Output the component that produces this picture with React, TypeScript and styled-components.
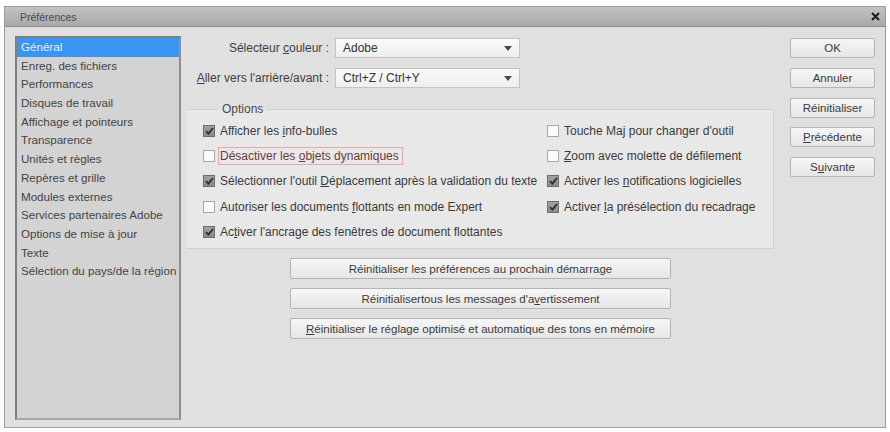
import React, { FC } from "react";
import styled, { createGlobalStyle } from "styled-components";

const GlobalStyle = createGlobalStyle`
  html, body {
    margin: 0;
    padding: 0;
    background: #ffffff;
  }
  body {
    font-family: "Liberation Sans", Arial, sans-serif;
    font-size: 12px;
    color: #3c3c3c;
  }
`;

const Window = styled.div`
  width: 882px;
  height: 422px;
  margin: 6px 4px 4px 4px;
  box-sizing: border-box;
  border: 1px solid #9c9c9c;
  background: #e0e0e0;
  display: flex;
  flex-direction: column;
`;

const TitleBar = styled.div`
  height: 19px;
  flex-shrink: 0;
  display: flex;
  align-items: center;
  justify-content: space-between;
  padding: 0 5px 0 15px;
  background: linear-gradient(#c2c2c2, #a9a9a9);
  border-bottom: 1px solid #8c8c8c;
`;

const TitleText = styled.span`
  font-size: 10.5px;
  color: #4a4a4a;
`;

const Close = styled.svg`
  width: 9px;
  height: 9px;
`;

const Body = styled.div`
  flex: 1;
  display: flex;
  padding: 9px 9px 7px 10px;
  min-height: 0;
`;

const Sidebar = styled.ul`
  list-style: none;
  margin: 0;
  padding: 0;
  width: 166px;
  box-sizing: border-box;
  border: 2px solid #8f8f8f;
  border-top-color: #7e7e7e;
  border-left-color: #7e7e7e;
  border-bottom-color: #a8a8a8;
  background: #d3d3d3;
  flex-shrink: 0;
`;

const SideItem = styled.li<{ $active?: boolean }>`
  height: 18.7px;
  line-height: 18.7px;
  padding-left: 4px;
  font-size: 11.6px;
  background: ${(p) => (p.$active ? "#3a95f2" : "transparent")};
  color: ${(p) => (p.$active ? "#e4eefb" : "#444")};
  white-space: nowrap;
`;

const Main = styled.div`
  width: 587px;
  margin-left: 6px;
  padding-top: 1px;
  display: flex;
  flex-direction: column;
  flex-shrink: 0;
`;

const FormRow = styled.div<{ $top: number }>`
  display: flex;
  align-items: center;
  margin-top: ${(p) => p.$top}px;
`;

const FormLabel = styled.span`
  width: 142px;
  text-align: right;
  white-space: nowrap;
  color: #3e3e3e;
`;

const Select = styled.div`
  margin-left: 6px;
  width: 185px;
  height: 20px;
  box-sizing: border-box;
  border: 1px solid #c4c4c4;
  background: linear-gradient(#fafafa, #eeeeee);
  display: flex;
  align-items: center;
  justify-content: space-between;
  padding: 0 7px 0 7px;
  color: #333;
`;

const Arrow = styled.svg`
  width: 8px;
  height: 5px;
`;

const Group = styled.fieldset`
  margin: 14px 0 0 0;
  padding: 2px 0 5px 15px;
  border: 1px solid #d2d2d2;
  border-left-color: #e6e6e6;
  background: #e8e8e8;
  height: 147px;
  box-sizing: border-box;
  min-width: 0;
`;

const Legend = styled.legend`
  margin-left: 16px;
  padding: 0 3px;
  color: #4a4a4a;
`;

const OptionGrid = styled.div`
  display: grid;
  grid-template-columns: 344px auto;
  grid-auto-rows: 25.3px;
  align-items: center;
`;

const Check = styled.label<{ $focus?: boolean }>`
  display: flex;
  align-items: center;
  white-space: nowrap;
  color: ${(p) => (p.$focus ? "#6a3c3c" : "#3a3a3a")};
`;

const Box = styled.span<{ $on?: boolean }>`
  width: 12px;
  height: 12px;
  box-sizing: border-box;
  flex-shrink: 0;
  margin-right: 5px;
  border: 1px solid ${(p) => (p.$on ? "#6e6e6e" : "#a6a6a6")};
  background: ${(p) => (p.$on ? "linear-gradient(#a2a2a2, #8a8a8a)" : "#fbfbfb")};
  display: flex;
  align-items: center;
  justify-content: center;
`;

const Focus = styled.span`
  border: 1px solid #e6a9a9;
  padding: 1px 3px 1px 1px;
  margin-left: -2px;
`;

const Key = styled.u`
  text-underline-offset: 1px;
`;

const ResetList = styled.div`
  display: flex;
  flex-direction: column;
  align-items: center;
  gap: 9px;
  margin-top: 9px;
`;

const Button = styled.div<{ $wide?: boolean }>`
  width: ${(p) => (p.$wide ? "381px" : "85px")};
  height: ${(p) => (p.$wide ? "21px" : "20px")};
  box-sizing: border-box;
  border: 1px solid #b4b4b4;
  border-radius: 2px;
  background: linear-gradient(#f6f6f6, #e6e6e6);
  display: flex;
  align-items: center;
  justify-content: center;
  color: #3a3a3a;
  font-size: 11.5px;
  white-space: nowrap;
`;

const SideButtons = styled.div`
  margin-left: 16px;
  padding-top: 2px;
  display: flex;
  flex-direction: column;
  gap: 9.8px;
`;

const CheckMark: FC = () => (
  <svg width="9" height="8" viewBox="0 0 9 8">
    <path d="M1 4.2 L3.4 6.6 L8 1" fill="none" stroke="#2e2e2e" strokeWidth="1.8" />
  </svg>
);

const Opt: FC<{ on?: boolean; focus?: boolean; children: React.ReactNode }> = ({ on, focus, children }) => (
  <Check $focus={focus}>
    <Box $on={on}>{on && <CheckMark />}</Box>
    {focus ? <Focus>{children}</Focus> : <span>{children}</span>}
  </Check>
);

const sections = [
  "Général",
  "Enreg. des fichiers",
  "Performances",
  "Disques de travail",
  "Affichage et pointeurs",
  "Transparence",
  "Unités et règles",
  "Repères et grille",
  "Modules externes",
  "Services partenaires Adobe",
  "Options de mise à jour",
  "Texte",
  "Sélection du pays/de la région",
];

const DropArrow: FC = () => (
  <Arrow viewBox="0 0 8 5">
    <path d="M0 0 H8 L4 5 Z" fill="#4a4a4a" />
  </Arrow>
);

const App: FC = () => {
  return (
    <>
      <GlobalStyle />
      <Window>
        <TitleBar>
          <TitleText>Préférences</TitleText>
          <Close viewBox="0 0 9 9">
            <path d="M1 1 L8 8 M8 1 L1 8" stroke="#1e1e1e" strokeWidth="2" />
          </Close>
        </TitleBar>
        <Body>
          <Sidebar>
            {sections.map((s, i) => (
              <SideItem key={s} $active={i === 0}>
                {s}
              </SideItem>
            ))}
          </Sidebar>
          <Main>
            <FormRow $top={1}>
              <FormLabel>
                Sélecteur <Key>c</Key>ouleur :
              </FormLabel>
              <Select>
                <span>Adobe</span>
                <DropArrow />
              </Select>
            </FormRow>
            <FormRow $top={10}>
              <FormLabel>
                <Key>A</Key>ller vers l'arrière/avant :
              </FormLabel>
              <Select>
                <span>Ctrl+Z / Ctrl+Y</span>
                <DropArrow />
              </Select>
            </FormRow>
            <Group>
              <Legend>Options</Legend>
              <OptionGrid>
                <Opt on>
                  Afficher les <Key>i</Key>nfo-bulles
                </Opt>
                <Opt>
                  Touche Ma<Key>j</Key> pour changer d'outil
                </Opt>
                <Opt focus>
                  Désactiver les <Key>o</Key>bjets dynamiques
                </Opt>
                <Opt>
                  <Key>Z</Key>oom avec molette de défilement
                </Opt>
                <Opt on>
                  Sélectionner l'outil <Key>D</Key>éplacement après la validation du texte
                </Opt>
                <Opt on>
                  Activer les <Key>n</Key>otifications logicielles
                </Opt>
                <Opt>
                  Autoriser les documents <Key>f</Key>lottants en mode Expert
                </Opt>
                <Opt on>
                  Activer <Key>l</Key>a présélection du recadrage
                </Opt>
                <Opt on>
                  Ac<Key>t</Key>iver l'ancrage des fenêtres de document flottantes
                </Opt>
              </OptionGrid>
            </Group>
            <ResetList>
              <Button $wide>
                <span>Réinitialiser les préférences au prochain démarrage</span>
              </Button>
              <Button $wide>
                <span>
                  Réinitialisertous les messages d'a<Key>v</Key>ertissement
                </span>
              </Button>
              <Button $wide>
                <span>
                  <Key>R</Key>éinitialiser le réglage optimisé et automatique des tons en mémoire
                </span>
              </Button>
            </ResetList>
          </Main>
          <SideButtons>
            <Button>OK</Button>
            <Button>Annuler</Button>
            <Button>Réinitialiser</Button>
            <Button>
              <span>
                <Key>P</Key>récédente
              </span>
            </Button>
            <Button>
              <span>
                S<Key>u</Key>ivante
              </span>
            </Button>
          </SideButtons>
        </Body>
      </Window>
    </>
  );
};

export default App;
